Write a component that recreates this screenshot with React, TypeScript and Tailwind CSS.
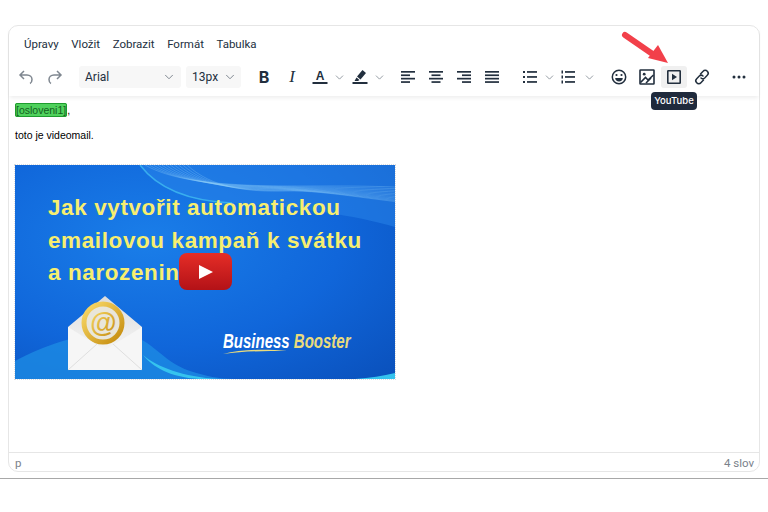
import { ChevronDown } from 'lucide-react';
import type { ReactNode } from 'react';

const MENUS = ['Úpravy', 'Vložit', 'Zobrazit', 'Formát', 'Tabulka'];

function Icon({ children, w = 'w-7', active = false }: { children: ReactNode; w?: string; active?: boolean }) {
  return (
    <div className={`${w} h-[22px] flex items-center justify-center shrink-0 rounded-[3px] ${active ? 'bg-[#f0f0f0]' : ''}`}>
      {children}
    </div>
  );
}

function Glyph({ children, className = 'text-[#222f3e]' }: { children: ReactNode; className?: string }) {
  return (
    <svg width="18" height="18" viewBox="0 0 18 18" fill="currentColor" className={className}>
      {children}
    </svg>
  );
}

function Chev({ className = '' }: { className?: string }) {
  return <ChevronDown size={13} strokeWidth={1.5} className={`text-[#7f8790] shrink-0 ${className}`} />;
}

function Lines({ rows }: { rows: [number, number][] }) {
  return (
    <Glyph>
      {rows.map(([x, w], i) => (
        <rect key={i} x={x} y={3 + i * 3.4} width={w} height="1.7" />
      ))}
    </Glyph>
  );
}

function Select({ label, className }: { label: string; className: string }) {
  return (
    <div className={`h-[22px] bg-[#f7f7f7] rounded-[3px] flex items-center justify-between shrink-0 ${className}`}>
      <span className="text-[12px] text-[#222f3e] font-['Roboto',sans-serif]">{label}</span>
      <ChevronDown size={14} strokeWidth={1.5} className="text-[#6f7882]" />
    </div>
  );
}

function Toolbar() {
  return (
    <div className="h-[30px] pl-[3px] flex items-center">
      <Icon w="w-[28px]">
        <svg width="18" height="18" viewBox="0 0 18 18" fill="none" stroke="#7f8790" strokeWidth="1.5">
          <path d="M7 3 3 7l4 4M3 7h7c3 0 5 2 5 4.500S14 15 13 15.500" />
        </svg>
      </Icon>
      <Icon w="w-[30px]">
        <svg width="18" height="18" viewBox="0 0 18 18" fill="none" stroke="#7f8790" strokeWidth="1.5">
          <path d="m11 3 4 4-4 4m4-4H8c-3 0-5 2-5 4.500S4 15 5 15.500" />
        </svg>
      </Icon>
      <Select label="Arial" className="w-[102px] ml-[9px] pl-[6px] pr-[5px]" />
      <Select label="13px" className="w-[55px] ml-[5px] pl-[6px] pr-[4px]" />
      <Icon w="w-[28px] ml-[9px]">
        <span className="text-[16px] font-bold text-[#222f3e] font-['Inter',sans-serif]">B</span>
      </Icon>
      <Icon w="w-[28px]">
        <span className="text-[17px] italic text-[#222f3e] font-['Liberation_Serif',serif]">I</span>
      </Icon>
      <Icon w="w-[28px]">
        <Glyph>
          <text x="9" y="11.500" textAnchor="middle" fontSize="12" fontWeight="700" fontFamily="'Liberation Sans', sans-serif">A</text>
          <rect x="1.500" y="14" width="15" height="2" />
        </Glyph>
      </Icon>
      <Chev className="ml-[-1px]" />
      <Icon w="w-[28px]">
        <Glyph>
          <path d="m11.500 2 3.500 3-5.500 6.500-3.500-3zM5.500 9.500l3 2.500-1.500 1H3.500z" />
          <rect x="1.500" y="14" width="15" height="2" />
        </Glyph>
      </Icon>
      <Chev className="ml-[-1px]" />
      <Icon w="w-[28px] ml-[8px]">
        <Lines rows={[[2, 14], [2, 9], [2, 14], [2, 9]]} />
      </Icon>
      <Icon w="w-[28px]">
        <Lines rows={[[2, 14], [4.500, 9], [2, 14], [4.500, 9]]} />
      </Icon>
      <Icon w="w-[28px]">
        <Lines rows={[[2, 14], [7, 9], [2, 14], [7, 9]]} />
      </Icon>
      <Icon w="w-[28px]">
        <Lines rows={[[2, 14], [2, 14], [2, 14], [2, 14]]} />
      </Icon>
      <Icon w="w-[28px] ml-[10px]">
        <Glyph>
          {[4, 9, 14].map((y) => (
            <g key={y}>
              <rect x="2" y={y - 1} width="2" height="2" />
              <rect x="6" y={y - 0.9} width="10" height="1.700" />
            </g>
          ))}
        </Glyph>
      </Icon>
      <Chev className="ml-[-1px]" />
      <Icon w="w-[28px] ml-[-2px]">
        <Glyph>
          {[4, 9, 14].map((y) => (
            <g key={y}>
              <rect x="2.500" y={y - 1.500} width="1.500" height="3" />
              <rect x="6" y={y - 0.9} width="10" height="1.700" />
            </g>
          ))}
        </Glyph>
      </Icon>
      <Chev className="ml-[1px]" />
      <Icon w="w-[28px] ml-[9px]">
        <svg width="18" height="18" viewBox="0 0 18 18" className="text-[#222f3e]" fill="currentColor">
          <circle cx="9" cy="9" r="6.700" fill="none" stroke="currentColor" strokeWidth="1.500" />
          <circle cx="6.500" cy="7" r="1.100" />
          <circle cx="11.500" cy="7" r="1.100" />
          <path d="M5.200 10h7.600c0 2.200-1.700 3.500-3.800 3.500S5.200 12.200 5.200 10z" />
        </svg>
      </Icon>
      <Icon w="w-[27px]">
        <svg width="18" height="18" viewBox="0 0 18 18" className="text-[#222f3e]" fill="none" stroke="currentColor" strokeWidth="1.600">
          <rect x="2" y="2" width="14" height="14" rx="0.500" />
          <circle cx="6.200" cy="6.200" r="1.400" fill="currentColor" stroke="none" />
          <path d="m2.500 14.500 5-5 2.500 2.500 5.500-5" />
          <path d="m8 15 5-5" />
        </svg>
      </Icon>
      <Icon w="w-[26px] ml-[1px]" active>
        <svg width="18" height="18" viewBox="0 0 18 18" className="text-[#222f3e]" fill="currentColor">
          <rect x="2.800" y="2.800" width="12.400" height="12.400" rx="0.500" fill="none" stroke="currentColor" strokeWidth="1.600" />
          <path d="M7 5.800 12 9l-5 3.200z" />
        </svg>
      </Icon>
      <Icon w="w-[28px] ml-[1px]">
        <svg width="18" height="18" viewBox="0 0 18 18" className="text-[#222f3e]" fill="none" stroke="currentColor" strokeWidth="1.500" strokeLinecap="round">
          <path d="m7.500 6 2.600-2.800a2.700 2.700 0 0 1 4.200 0 2.900 2.900 0 0 1 0 4.100L11.700 10a2.700 2.700 0 0 1-3.700 0" />
          <path d="m10.500 12-2.600 2.800a2.700 2.700 0 0 1-4.200 0 2.900 2.900 0 0 1 0-4.100L6.300 8a2.700 2.700 0 0 1 3.700 0" />
        </svg>
      </Icon>
      <Icon w="w-[28px] ml-[9px]">
        <Glyph>
          <circle cx="4" cy="9" r="1.500" />
          <circle cx="9" cy="9" r="1.500" />
          <circle cx="14" cy="9" r="1.500" />
        </Glyph>
      </Icon>
    </div>
  );
}

function VideoThumb() {
  return (
    <div className="relative w-[380px] h-[214px] ml-[6px] mt-[23px] bg-[radial-gradient(ellipse_at_35%_35%,#1a7ee9_0%,#1066da_55%,#0a50bb_100%)] overflow-hidden outline-1 outline-dotted outline-[#dddddd]">
      <svg viewBox="0 0 380 214" className="absolute inset-0 w-full h-full" fill="none">
        <path d="M125 0c18 24 48 36 92 38s115 10 163 24V0z" fill="#2a86ea" opacity="0.5" />
        {[0, 3, 6, 9, 12, 15, 18, 21, 24, 27, 30].map((d) => (
          <path key={d} d={`M${130 + d * 1.4} 0c25 ${14 + d * 0.3} 60 ${18 + d * 0.3} 100 ${20 + d * 0.2}s100 ${d * 0.4} 150 ${d * 0.4 + 2}`} stroke="#8fd0f7" strokeWidth="0.500" opacity="0.6" />
        ))}
        <path d="M125 0c18 24 48 36 92 38" stroke="#45c4f2" strokeWidth="1.500" opacity="0.7" />
        <path d="M0 196c30-16 70-30 105-28 30 2 40 28 70 38 15 5 30 8 45 8H0z" fill="#1e8ee4" opacity="0.75" />
        <path d="M128 190c14 12 40 22 76 24h-20c-30-2-46-12-56-24z" fill="#35c3ee" />
        <path d="M340 214c15-1 28-3 40-6v6z" fill="#35c3ee" />
      </svg>
      <div className="relative pt-[27px] pl-[33px] text-[22.500px] leading-[32.500px] font-bold tracking-[0.6px] text-[#f7ee6f] font-['Liberation_Sans',sans-serif] whitespace-nowrap">
        <div>Jak vytvořit automatickou</div>
        <div>emailovou kampaň k svátku</div>
        <div>a narozenin</div>
      </div>
      <div className="absolute left-[164px] top-[88px] w-[53px] h-[37px] rounded-[8px] bg-[linear-gradient(#e52d27,#b31217)] flex items-center justify-center">
        <svg width="16" height="16" viewBox="0 0 16 16">
          <path d="M1 1l14 7-14 7z" fill="#fff" />
        </svg>
      </div>
      <svg viewBox="0 0 76 78" className="absolute left-[52px] top-[129px] w-[76px] h-[78px]">
        <defs>
          <linearGradient id="env" x1="0" y1="0" x2="0" y2="1">
            <stop offset="0" stopColor="#dcdcdc" />
            <stop offset="1" stopColor="#fdfdfd" />
          </linearGradient>
          <linearGradient id="gold" x1="0" y1="0" x2="1" y2="1">
            <stop offset="0" stopColor="#fbdc6a" />
            <stop offset="1" stopColor="#c48a0c" />
          </linearGradient>
        </defs>
        <path d="M1 33 38 2l37 31v43H1z" fill="url(#env)" />
        <circle cx="36" cy="29" r="19" fill="#e9e6da" stroke="url(#gold)" strokeWidth="5" />
        <text x="36" y="38" textAnchor="middle" fontSize="27" fontWeight="700" fontStyle="italic" fontFamily="'Liberation Sans', sans-serif" fill="url(#gold)">@</text>
        <path d="M1 33 38 56l37-23v43H1z" fill="#f6f6f6" />
        <path d="M1 76 30 50M75 76 46 50" stroke="#dfdfdf" strokeWidth="1" />
      </svg>
      <div className="absolute left-[208px] top-[166px] text-[20px] leading-[20px] font-bold italic text-white font-['Liberation_Sans',sans-serif] whitespace-nowrap scale-x-[0.75] origin-left">
        Business <span className="text-[#eadb7c]">Booster</span>
      </div>
      <svg viewBox="0 0 64 6" className="absolute left-[208px] top-[184px] w-[64px] h-[6px]">
        <path d="M0 5C18 0 44 0 64 2 42 2 20 2 0 5z" fill="#eadb7c" />
      </svg>
    </div>
  );
}

export default function App() {
  return (
    <div className="relative w-[768px] h-[512px] bg-white overflow-hidden font-['Inter',sans-serif]">
      <div className="h-[479px] pt-[25px] pl-[8px] border-b border-[#a8a8a8]">
        <div className="w-[752px] h-[447px] border border-[#e6e6e6] rounded-[10px] flex flex-col">
          <div className="h-[70px] shadow-[0_3px_4px_-1px_rgba(0,0,0,0.07)] flex flex-col">
            <div className="h-[36px] pt-[9px] pl-[15px] flex gap-[12.500px] text-[11.500px] leading-[18px] text-[#222f3e] font-['Roboto',sans-serif]">
              {MENUS.map((m) => (
                <span key={m}>{m}</span>
              ))}
            </div>
            <Toolbar />
          </div>
          <div className="flex-1 pt-[7px] font-['Liberation_Sans',sans-serif] text-[10.500px] text-black">
            <div className="pl-[6px] h-[14px] leading-[14px]">
              <span className="bg-[#4fd15c] border border-[#1f9c2e] rounded-[2px] text-[#14601f]">[osloveni1]</span>,
            </div>
            <div className="pl-[6px] mt-[11px] h-[14px] leading-[14px]">toto je videomail.</div>
            <VideoThumb />
          </div>
          <div className="h-[19px] border-t border-[#e6e6e6] pl-[6px] pr-[5px] pt-[3px] flex items-center justify-between text-[11.500px] text-[#7a828b] font-['Roboto',sans-serif]">
            <span>p</span>
            <span>4 slov</span>
          </div>
        </div>
      </div>
      <svg viewBox="0 0 768 512" className="absolute inset-0 w-full h-full pointer-events-none">
        <path d="M625 35 654 55" stroke="#f2404a" strokeWidth="6" strokeLinecap="round" />
        <path d="M668 63 648 58 658 45z" fill="#f2404a" />
      </svg>
      <div className="absolute left-[651px] top-[92px] w-[46px] h-[18px] rounded-[4px] bg-[#1f2a3c] text-white text-[9.500px] font-medium flex items-center justify-center">
        YouTube
      </div>
    </div>
  );
}
